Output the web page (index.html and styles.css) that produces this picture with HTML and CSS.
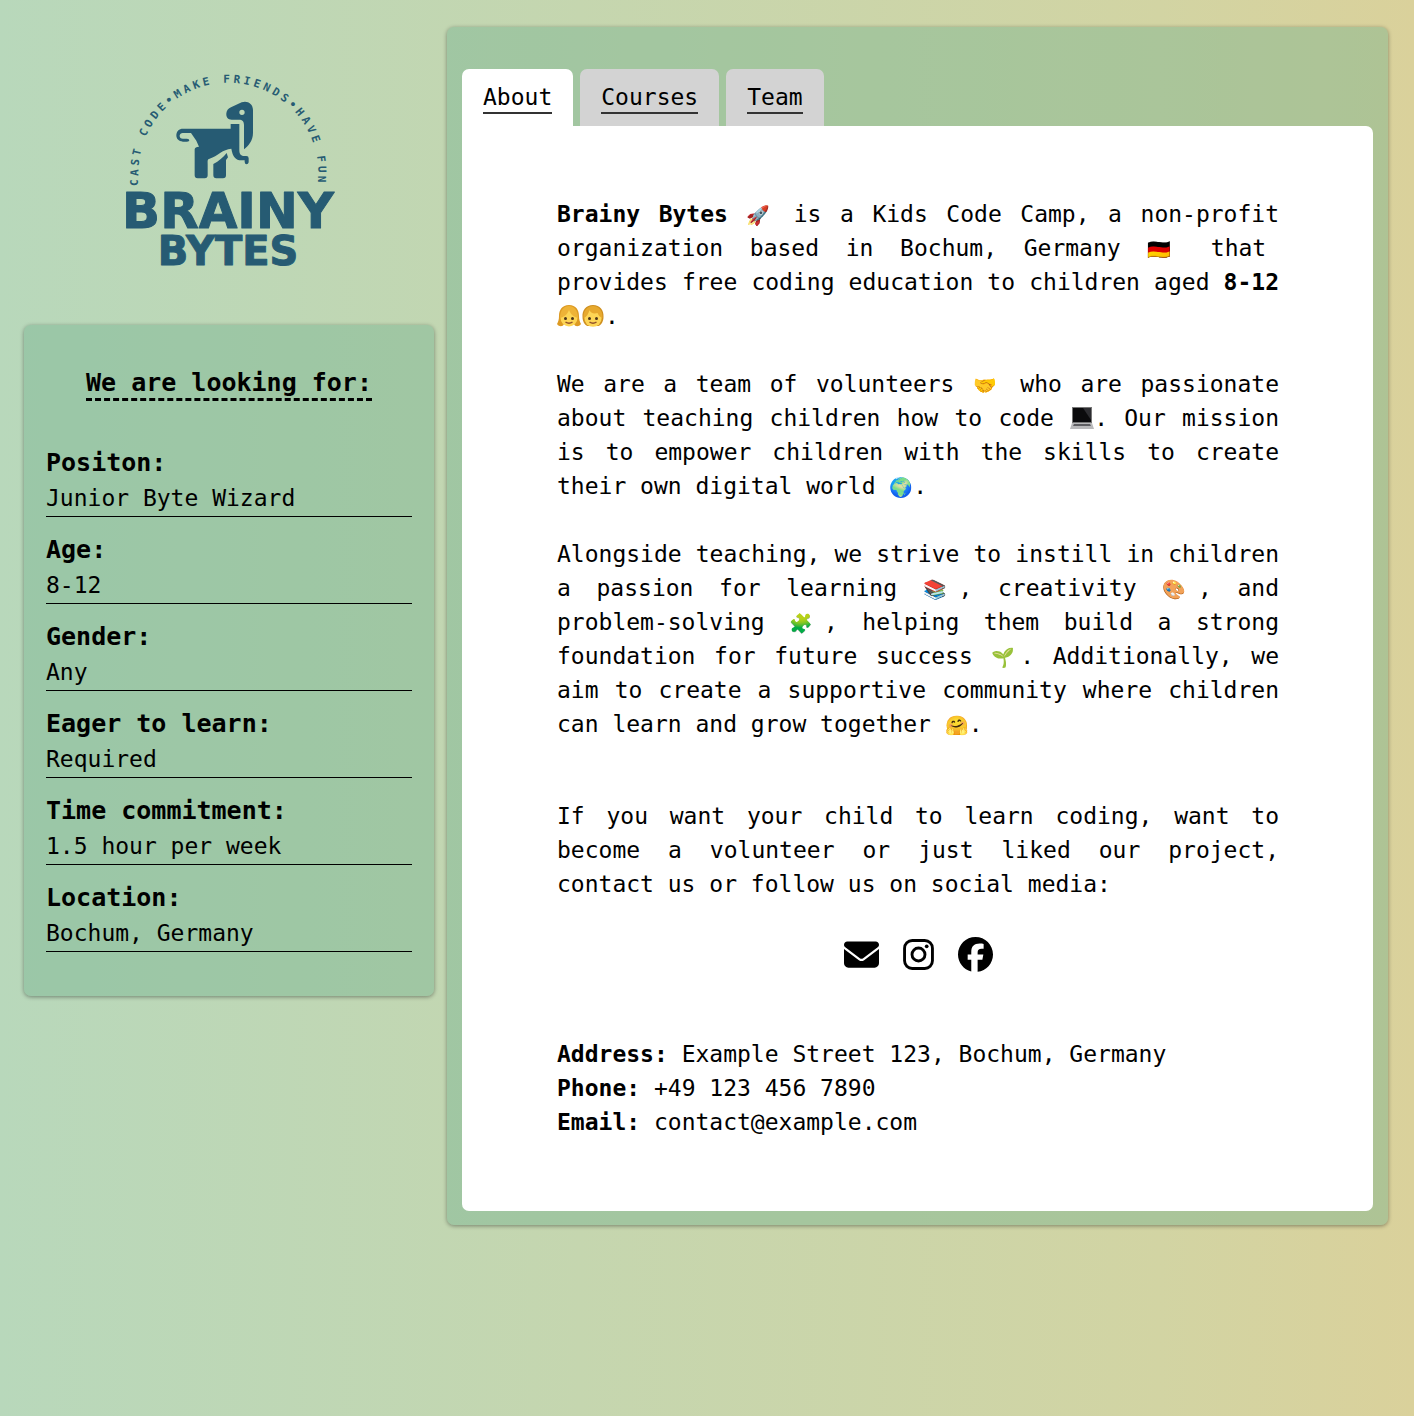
FILE: index.html
```html
<!DOCTYPE html>
<html lang="en">
<head>
<meta charset="utf-8">
<meta name="viewport" content="width=device-width, initial-scale=1">
<title>Brainy Bytes</title>
<link rel="stylesheet" href="styles.css">
</head>
<body>
<div class="page">
  <aside class="sidebar">
    <svg class="logo" viewBox="0 0 720 660" role="img" aria-label="Brainy Bytes logo">
      <defs><path id="arc" d="M88 378V338A270 270 0 0 1 628 338V378"/></defs>
      <text class="logo-tagline"><textPath href="#arc">CAST CODE•MAKE FRIENDS•HAVE FUN</textPath></text>
      <path fill-rule="evenodd" d="M366 142L398 127C414 121 432 130 432 150V218C432 242 418 258 405 268V196C405 184 400 179 390 179H368C357 179 351 172 352 160C353 151 358 146 366 142ZM399 149A8 8 0 1 0 399 165A8 8 0 1 0 399 149Z"/>
      <path d="M222 206H365V192H391V270C391 284 397 288 406 288H412Q419 288 419 295V307Q418 313 412 313Q408 313 407 306V301H397C380 301 371 290 367 266C340 268 330 286 298 298C295 301 296 306 296 312V346Q296 355 287 355H266Q257 355 257 346V268Q258 260 270 260L262 242L246 219H224C214 219 212 224 212 228C212 233 216 237 224 236H234Q241 236 241 241Q241 245 234 245H222C208 244 202 236 202 226C202 214 210 206 222 206Z"/>
      <path d="M313 312C330 304 342 292 353 279L357 292L351 300V346Q351 355 342 355H322Q313 355 313 346Z"/>
      <text class="logo-name" x="357" y="503">BRAINY</text>
      <text class="logo-name logo-name-small" x="357" y="616">BYTES</text>
    </svg>
    <section class="card wanted">
      <h2 class="wanted-title">We are looking for:</h2>
      <dl class="facts">
        <div class="fact"><dt>Positon:</dt><dd>Junior Byte Wizard</dd></div>
        <div class="fact"><dt>Age:</dt><dd>8-12</dd></div>
        <div class="fact"><dt>Gender:</dt><dd>Any</dd></div>
        <div class="fact"><dt>Eager to learn:</dt><dd>Required</dd></div>
        <div class="fact"><dt>Time commitment:</dt><dd>1.5 hour per week</dd></div>
        <div class="fact"><dt>Location:</dt><dd>Bochum, Germany</dd></div>
      </dl>
    </section>
  </aside>
  <main class="card content">
    <nav class="tabs">
      <a class="tab tab-active" href="#about"><span>About</span></a>
      <a class="tab" href="#courses"><span>Courses</span></a>
      <a class="tab" href="#team"><span>Team</span></a>
    </nav>
    <article class="panel" id="about">
      <p><strong>Brainy Bytes</strong> <span class="emoji">🚀</span> is a Kids Code Camp, a non-profit organization based in Bochum, Germany <span class="emoji">🇩🇪</span> that provides free coding education to children aged <strong>8-12</strong> <svg class="picture" viewBox="0 0 24 24" role="img" aria-label="girl"><path fill="#dd9a22" d="M12 1C5 1 2 6 2 12c0 4-1 6-2 8 2 3 6 3 7 0h10c1 3 5 3 7 0-1-2-2-4-2-8C22 6 19 1 12 1z"/><circle cx="12" cy="14" r="8.500" fill="#fdd555"/><path fill="#eeb337" d="M3 14C3 6 7 2 12 2s9 4 9 12c-4-1-7-3-9-8-2 5-5 7-9 8z"/><circle cx="8.500" cy="14.500" r="1.500" fill="#4d3519"/><circle cx="15.500" cy="14.500" r="1.500" fill="#4d3519"/><path d="M8.500 18q3.500 2.500 7 0" fill="none" stroke="#91502a" stroke-width="1.500"/></svg><svg class="picture" viewBox="0 0 24 24" role="img" aria-label="child"><path fill="#cf9020" d="M12 1C5 1 1 6 1.500 13c0 4 2 8 5 9h11c3-1 5-5 5-9C23 6 19 1 12 1z"/><circle cx="12" cy="14" r="8.700" fill="#fdd555"/><path fill="#e7a92e" d="M2.500 14C2 6 7 2 12 2s10 4 9.500 12c-3-1-4-3-5-5-4 1-7 0-8-3-1 4-3 7-6 8z"/><circle cx="8.500" cy="14.500" r="1.500" fill="#4d3519"/><circle cx="15.500" cy="14.500" r="1.500" fill="#4d3519"/><path d="M8.500 18q3.500 2.500 7 0" fill="none" stroke="#91502a" stroke-width="1.500"/></svg>.</p>
      <p>We are a team of volunteers <span class="emoji">🤝</span> who are passionate about teaching children how to code <svg class="picture" viewBox="0 0 24 24" role="img" aria-label="laptop"><path fill="#777" d="M2 1h20v16H2z"/><path fill="#0b0b0d" d="M3 2h18v14H3z"/><path fill="#2d2d31" d="M13 2h8v12z"/><path fill="#b9b9bb" d="M2 17h20l2 6H0z"/><path fill="#5d5d61" d="M4 18h16l1 2H3z"/></svg>. Our mission is to empower children with the skills to create their own digital world <span class="emoji">🌍</span>.</p>
      <p>Alongside teaching, we strive to instill in children a passion for learning <span class="emoji">📚</span>, creativity <span class="emoji">🎨</span>, and problem-solving <span class="emoji">🧩</span>, helping them build a strong foundation for future success <span class="emoji">🌱</span>. Additionally, we aim to create a supportive community where children can learn and grow together <span class="emoji">🤗</span>.</p>
      <p class="invite">If you want your child to learn coding, want to become a volunteer or just liked our project, contact us or follow us on social media:</p>
      <div class="social">
        <a href="#email" aria-label="Email"><svg viewBox="0 0 512 512"><path d="M48 64C21.5 64 0 85.5 0 112c0 15.1 7.1 29.3 19.2 38.4L236.8 313.6c11.4 8.5 27 8.5 38.4 0L492.8 150.4c12.1-9.1 19.2-23.3 19.2-38.4c0-26.5-21.5-48-48-48H48zM0 176V384c0 35.3 28.7 64 64 64H448c35.3 0 64-28.7 64-64V176L294.4 339.2c-22.8 17.1-54 17.1-76.8 0L0 176z"/></svg></a>
        <a href="#instagram" aria-label="Instagram"><svg viewBox="0 0 512 512"><rect class="line" x="52" y="52" width="408" height="408" rx="112"/><circle class="line" cx="256" cy="256" r="95"/><circle cx="376" cy="136" r="27"/></svg></a>
        <a href="#facebook" aria-label="Facebook"><svg viewBox="0 0 512 512"><path d="M512 256C512 114.6 397.4 0 256 0S0 114.6 0 256C0 376 82.7 476.8 194.2 504.5V334.2H141.4V256h52.8V222.3c0-87.1 39.4-127.5 125-127.5c16.2 0 44.2 3.2 55.7 6.4V172c-6-.6-16.5-1-29.6-1c-42 0-58.2 15.9-58.2 57.2V256h83.6l-14.4 78.2H287V510.1C413.8 494.8 512 386.9 512 256z"/></svg></a>
      </div>
      <address class="contact">
        <div><strong>Address:</strong> Example Street 123, Bochum, Germany</div>
        <div><strong>Phone:</strong> +49 123 456 7890</div>
        <div><strong>Email:</strong> contact@example.com</div>
      </address>
    </article>
  </main>
</div>
</body>
</html>
```
FILE: styles.css
```css
* { box-sizing: border-box; }

body {
  margin: 0;
  min-height: 100vh;
  background: linear-gradient(90deg, #b8d8bb 0%, #d2d4a3 82%, #dad19b 100%);
  color: #000;
  font: 23px/34px "DejaVu Sans Mono", monospace;
}

.page {
  display: grid;
  grid-template-columns: 410fr 941fr;
  gap: 13px;
  align-items: start;
  padding: 27px 26px 27px 24px;
}

.card {
  background: rgba(111, 174, 139, 0.4);
  border-radius: 7px;
  box-shadow: 0 1px 4px rgba(0, 0, 0, 0.4);
}

.sidebar {
  display: flex;
  flex-direction: column;
  gap: 45px;
  padding-top: 33px;
}

.logo {
  align-self: center;
  width: 240px;
  height: 220px;
  fill: #265b73;
}

.logo-tagline {
  font: bold 33px "DejaVu Sans Mono", monospace;
  letter-spacing: 10px;
}

.logo-name {
  font: bold 150px "DejaVu Sans", sans-serif;
  text-anchor: middle;
  stroke: #265b73;
  stroke-width: 3px;
  stroke-linejoin: round;
}

.logo-name-small { font-size: 120px; }

.wanted {
  display: flex;
  flex-direction: column;
  padding: 42px 22px 44px;
}

.wanted-title {
  align-self: center;
  margin: 0 0 29px;
  border-bottom: 3px dashed #000;
  font-size: 25px;
  line-height: 31px;
}

.facts { margin: 0; }

.fact {
  padding-top: 15px;
  border-bottom: 1px solid #000;
}

.fact dt {
  font-size: 25px;
  font-weight: bold;
  line-height: 36px;
}

.fact dd {
  margin: 0;
  line-height: 35px;
}

.content { padding: 42px 15px 14px; }

.tabs {
  display: flex;
  gap: 7px;
}

.tab {
  padding: 14px 21px 12px;
  border-radius: 7px 7px 0 0;
  background: #d3d3d3;
  color: #000;
  line-height: 29px;
  text-decoration: none;
}

.tab span {
  display: block;
  border-bottom: 2px solid #333;
}

.tab-active { background: #fff; }

.panel {
  padding: 71px 94px 72px 95px;
  border-radius: 0 7px 7px 7px;
  background: #fff;
  text-align: justify;
}

.panel p { margin: 0 0 34px; }

.emoji {
  font-size: 19px;
  line-height: 24px;
}

.picture {
  width: 24px;
  height: 24px;
  vertical-align: -4px;
}

.panel .invite { margin: 58px 0 36px; }

.social {
  display: flex;
  justify-content: center;
  gap: 22px;
  margin-bottom: 65px;
}

.social a { display: flex; }

.social svg {
  width: 35px;
  height: 35px;
  fill: #000;
}

.social .line {
  fill: none;
  stroke: #000;
  stroke-width: 42px;
}

.contact {
  font-style: normal;
  text-align: left;
}
```
